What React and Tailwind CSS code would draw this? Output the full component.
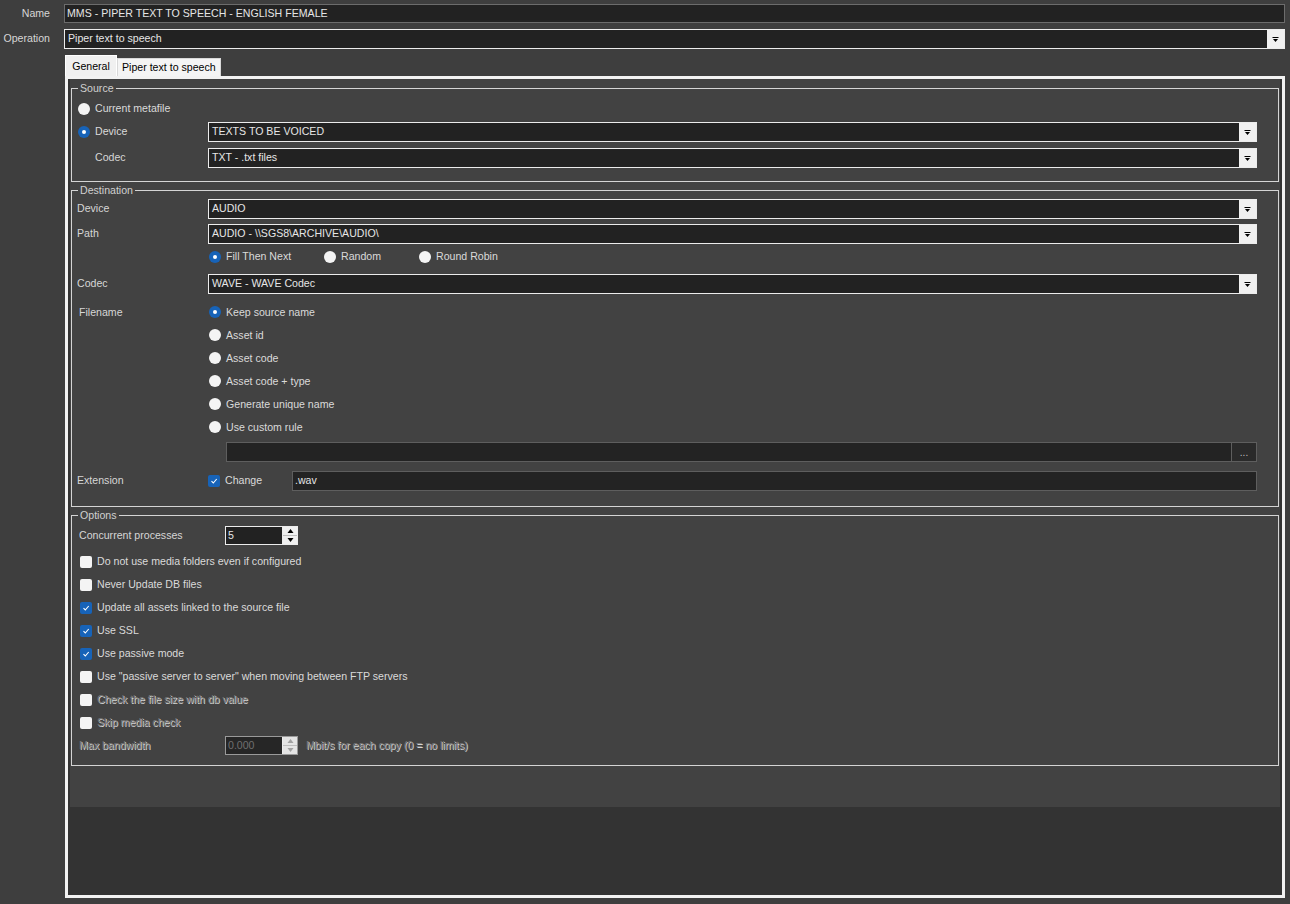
import React from 'react'

const font = { fontFamily: '"Liberation Sans", Arial, sans-serif' }

function Arrow() {
  return (
    <svg width="7" height="5" viewBox="0 0 7 5">
      <rect x="0.5" y="0" width="6" height="1" fill="#000" />
      <path d="M1 2h5l-2.5 3z" fill="#000" />
    </svg>
  )
}

function Select({ value }) {
  return (
    <div className="flex-1 h-[20px] flex bg-[#222] border border-[#ececec]">
      <div className="flex-1 flex items-center pl-[3px] text-[#e6e6e6]">{value}</div>
      <div className="w-[17px] bg-[#f0f0f0] flex items-center justify-center">
        <Arrow />
      </div>
    </div>
  )
}

function Radio({ checked, label }) {
  return (
    <div className="flex items-center gap-[5px]">
      {checked ? (
        <div className="w-[12px] h-[12px] rounded-full bg-[#1763b8] flex items-center justify-center">
          <div className="w-[4px] h-[4px] rounded-full bg-white" />
        </div>
      ) : (
        <div className="w-[12px] h-[12px] rounded-full bg-[#f4f4f4]" />
      )}
      <span className="text-[#dadada]">{label}</span>
    </div>
  )
}

function Check({ checked, label, disabled }) {
  return (
    <div className="h-[23px] flex items-center gap-[5px]">
      {checked ? (
        <div className="w-[12px] h-[12px] rounded-[2px] bg-[#1763b8] flex items-center justify-center">
          <svg width="8" height="8" viewBox="0 0 8 8">
            <path d="M1.5 4.2l1.8 1.8 3.4-4" stroke="#fff" strokeWidth="1.1" fill="none" />
          </svg>
        </div>
      ) : (
        <div className="w-[12px] h-[12px] rounded-[2px] bg-[#f4f4f4]" />
      )}
      <span
        className={
          disabled
            ? 'text-[#777777] [text-shadow:1px_1px_0_#d4d4d4]'
            : 'text-[#dadada]'
        }
      >
        {label}
      </span>
    </div>
  )
}

function Spinner({ value, disabled }) {
  return (
    <div
      className={`w-[73px] h-[19px] flex border ${
        disabled ? 'border-[#9a9a9a] bg-[#262626]' : 'border-[#ececec] bg-[#222]'
      }`}
    >
      <div
        className={`flex-1 flex items-center pl-[2px] ${
          disabled ? 'text-[#6f6f6f]' : 'text-[#e6e6e6]'
        }`}
      >
        {value}
      </div>
      <div className="w-[15px] flex flex-col gap-[1px] bg-[#bdbdbd] border-l border-[#ececec]">
        <div className={`flex-1 flex items-center justify-center ${disabled ? 'bg-[#e4e4e4]' : 'bg-[#f0f0f0]'}`}>
          <svg width="7" height="4" viewBox="0 0 7 4">
            <path d="M0.5 4h6l-3-4z" fill={disabled ? '#a0a0a0' : '#000'} />
          </svg>
        </div>
        <div className={`flex-1 flex items-center justify-center ${disabled ? 'bg-[#e4e4e4]' : 'bg-[#f0f0f0]'}`}>
          <svg width="7" height="4" viewBox="0 0 7 4">
            <path d="M0.5 0h6l-3 4z" fill={disabled ? '#a0a0a0' : '#000'} />
          </svg>
        </div>
      </div>
    </div>
  )
}

function GroupBox({ title, className, children }) {
  return (
    <div className={`relative border border-[#d4d4d4] ${className}`}>
      <div className="absolute -top-[8px] left-[6px] px-[2px] bg-[#424242] text-[#d0d0d0] leading-[14px]">
        {title}
      </div>
      {children}
    </div>
  )
}

export default function App() {
  return (
    <div className="w-[1290px] h-[904px] bg-[#3e3e3e] text-[10.6px] pt-[4px] overflow-hidden" style={font}>
      {/* header rows */}
      <div className="flex items-center pr-[5px]">
        <div className="w-[50px] text-right text-[#d6d6d6]">Name</div>
        <div className="ml-[14px] flex-1 h-[19px] flex items-center pl-[2px] bg-[#222] border border-[#6c6c6c] text-[#e6e6e6]">
          MMS - PIPER TEXT TO SPEECH - ENGLISH FEMALE
        </div>
      </div>
      <div className="mt-[6px] flex items-center pr-[5px]">
        <div className="w-[50px] text-right text-[#d6d6d6]">Operation</div>
        <div className="ml-[14px] flex-1 flex">
          <Select value="Piper text to speech" />
        </div>
      </div>

      {/* tabs */}
      <div className="mt-[7px] ml-[65px] flex items-end h-[20px] relative z-10">
        <div className="h-[21px] w-[52px] bg-[#f0f0f0] text-black flex items-start pt-[3px] justify-center border-t border-l border-r border-[#ffffff]">
          General
        </div>
        <div className="h-[18px] px-[4px] bg-[#f4f4f4] text-black flex items-center border border-b-0 border-[#d8d8d8]">
          Piper text to speech
        </div>
      </div>

      {/* panel */}
      <div className="ml-[65px] mr-[5px] h-[822px] border-[3px] border-[#f2f2f2] bg-[#333333] px-[2px]">
        <div className="bg-[#424242] px-[1px] pt-[9px] pb-[41px]">
          {/* Source */}
          <GroupBox title="Source" className="pt-[10px] pb-[13px] pl-[6px] pr-[21px]">
            <div className="h-[20px] flex items-center">
              <Radio label="Current metafile" />
            </div>
            <div className="mt-[3px] h-[20px] flex items-center">
              <div className="w-[130px]">
                <Radio checked label="Device" />
              </div>
              <Select value="TEXTS TO BE VOICED" />
            </div>
            <div className="mt-[6px] h-[20px] flex items-center">
              <div className="w-[130px] pl-[17px] text-[#d6d6d6]">Codec</div>
              <Select value="TXT - .txt files" />
            </div>
          </GroupBox>

          {/* Destination */}
          <GroupBox title="Destination" className="mt-[8px] pt-[8px] pb-[15px] pl-[5px] pr-[21px]">
            <div className="h-[20px] flex items-center">
              <div className="w-[131px] text-[#d6d6d6]">Device</div>
              <Select value="AUDIO" />
            </div>
            <div className="mt-[5px] h-[20px] flex items-center">
              <div className="w-[131px] text-[#d6d6d6]">Path</div>
              <Select value="AUDIO - \\SGS8\ARCHIVE\AUDIO\" />
            </div>
            <div className="mt-[3px] h-[20px] flex items-center pl-[132px]">
              <div className="w-[115px]">
                <Radio checked label="Fill Then Next" />
              </div>
              <div className="w-[95px]">
                <Radio label="Random" />
              </div>
              <Radio label="Round Robin" />
            </div>
            <div className="mt-[7px] h-[20px] flex items-center">
              <div className="w-[131px] text-[#d6d6d6]">Codec</div>
              <Select value="WAVE - WAVE Codec" />
            </div>
            <div className="mt-[7px] flex">
              <div className="w-[132px] pl-[2px] h-[23px] flex items-center text-[#d6d6d6]">Filename</div>
              <div className="flex flex-col">
                {[
                  ['Keep source name', true],
                  ['Asset id', false],
                  ['Asset code', false],
                  ['Asset code + type', false],
                  ['Generate unique name', false],
                  ['Use custom rule', false],
                ].map(([l, c]) => (
                  <div key={l} className="h-[23px] flex items-center">
                    <Radio checked={c} label={l} />
                  </div>
                ))}
              </div>
            </div>
            <div className="mt-[3px] ml-[149px] h-[20px] flex bg-[#232323] border border-[#5e5e5e]">
              <div className="flex-1" />
              <div className="w-[25px] border-l border-[#5e5e5e] bg-[#2a2a2a] flex items-center justify-center text-[#bdbdbd] text-[10px]">
                ...
              </div>
            </div>
            <div className="mt-[9px] h-[20px] flex items-center">
              <div className="w-[131px] text-[#d6d6d6]">Extension</div>
              <div className="w-[84px]">
                <Check checked label="Change" />
              </div>
              <div className="flex-1 h-[20px] flex items-center pl-[2px] bg-[#232323] border border-[#5e5e5e] text-[#e6e6e6]">
                .wav
              </div>
            </div>
          </GroupBox>

          {/* Options */}
          <GroupBox title="Options" className="mt-[8px] pt-[10px] pb-[10px] pl-[7px] pr-[21px]">
            <div className="h-[19px] flex items-center">
              <div className="w-[146px] text-[#d6d6d6]">Concurrent processes</div>
              <Spinner value="5" />
            </div>
            <div className="mt-[5px] pl-[1px] flex flex-col">
              <Check label="Do not use media folders even if configured" />
              <Check label="Never Update DB files" />
              <Check checked label="Update all assets linked to the source file" />
              <Check checked label="Use SSL" />
              <Check checked label="Use passive mode" />
              <Check label={'Use "passive server to server" when moving between FTP servers'} />
              <Check disabled label="Check the file size with db value" />
              <Check disabled label="Skip media check" />
            </div>
            <div className="mt-[2px] h-[19px] flex items-center">
              <div className="w-[146px] text-[#777777] [text-shadow:1px_1px_0_#d4d4d4]">Max bandwidth</div>
              <Spinner disabled value="0.000" />
              <div className="ml-[8px] text-[#777777] [text-shadow:1px_1px_0_#d4d4d4]">
                Mbit/s for each copy (0 = no limits)
              </div>
            </div>
          </GroupBox>
        </div>
      </div>
    </div>
  )
}
